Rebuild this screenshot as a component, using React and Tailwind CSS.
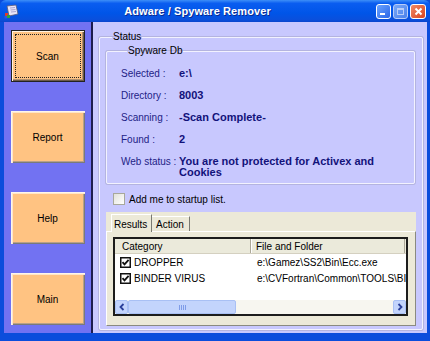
import React from 'react';

const sans = "font-['Liberation_Sans',Arial,sans-serif]";

function AppIcon() {
  return (
    <svg width="15" height="15" viewBox="0 0 15 15">
      <path d="M3 2 L12 1 L14 10 L5 12 Z" fill="#e8e4f8" stroke="#5a5a7a" strokeWidth="0.8" />
      <path d="M6 4 L11 3.5 M6.5 6 L11.5 5.5 M7 8 L12 7.5" stroke="#9a94c8" strokeWidth="0.8" />
      <rect x="1" y="9" width="3" height="3" fill="#e03a2a" />
      <rect x="3" y="11" width="3" height="3" fill="#2aa63a" />
      <rect x="0.5" y="12" width="2.5" height="2.5" fill="#2a58e0" />
    </svg>
  );
}

function TitleBar() {
  return (
    <div className="h-[22px] shrink-0 flex items-center bg-[linear-gradient(to_bottom,#3d8ff8_0%,#0a5df0_15%,#0055e8_60%,#0a4fdc_90%,#0a46cc_100%)] rounded-t-[6px]">
      <div className="ml-[4px] w-[15px] h-[15px] flex items-center justify-center">
        <AppIcon />
      </div>
      <div className="flex-1 text-center text-white text-[11px] font-bold leading-none tracking-[0.1px] [text-shadow:1px_1px_0_#0a2a90]">
        Adware / Spyware Remover
      </div>
      <div className="flex items-center gap-[2px] pr-[4px]">
        <div className="w-[15px] h-[15px] rounded-[3px] border border-white bg-[linear-gradient(135deg,#6aa3ff,#2a66e8)] flex items-end pl-[3px] pb-[3px]">
          <div className="w-[5px] h-[2px] bg-white" />
        </div>
        <div className="w-[15px] h-[15px] rounded-[3px] border border-[#b8cdf8] bg-[linear-gradient(135deg,#7aa8f6,#4a82ec)] flex items-center justify-center">
          <div className="w-[7px] h-[7px] border border-[#b8cdf8] border-t-2" />
        </div>
        <div className="w-[16px] h-[15px] rounded-[3px] border border-white bg-[linear-gradient(135deg,#f08a66,#d9441e)] flex items-center justify-center">
          <svg width="9" height="9" viewBox="0 0 9 9">
            <path d="M1.5 1.5 L7.5 7.5 M7.5 1.5 L1.5 7.5" stroke="#fff" strokeWidth="2" />
          </svg>
        </div>
      </div>
    </div>
  );
}

function SideButton({ label, active }) {
  return (
    <button
      className={`w-[74px] h-[52px] shrink-0 bg-[#ffc382] flex p-[3px] ${
        active
          ? 'border border-[#222] shadow-[inset_1px_1px_0_#fff3e3,inset_-1px_-1px_0_#6b5a48,inset_-2px_-2px_0_#b09070]'
          : 'shadow-[inset_1px_1px_0_#fff6ea,inset_2px_2px_0_#ffe6c8,inset_-1px_-1px_0_#7a7a7a,inset_-2px_-2px_0_#b8a088]'
      }`}
    >
      <div
        className={`flex-1 flex items-center justify-center text-[10px] text-black border border-dotted ${
          active ? 'border-[#222]' : 'border-transparent'
        }`}
      >
        {label}
      </div>
    </button>
  );
}

function Row({ label, value }) {
  return (
    <div className="h-[22px] flex items-center">
      <span className="w-[58px] text-[10px] text-[#1e1e86]">{label}</span>
      <span className="text-[11px] font-bold text-[#12127a]">{value}</span>
    </div>
  );
}

function Check() {
  return (
    <svg width="11" height="11" viewBox="0 0 11 11" className="shrink-0">
      <rect x="0.75" y="0.75" width="9.5" height="9.5" fill="#fff" stroke="#111" strokeWidth="1.5" />
      <path d="M2.5 5.2 L4.5 7.4 L8.6 2.8" fill="none" stroke="#111" strokeWidth="1.8" />
    </svg>
  );
}

function ScrollBtn({ dir }) {
  return (
    <div className="w-[13px] h-full shrink-0 bg-[#c3d4fc] border border-[#a9c0f4] rounded-[2px] flex items-center justify-center">
      <svg width="6" height="8" viewBox="0 0 6 8">
        <path
          d={dir === 'left' ? 'M4.5 1 L1.5 4 L4.5 7' : 'M1.5 1 L4.5 4 L1.5 7'}
          fill="none"
          stroke="#2a3f9a"
          strokeWidth="1.8"
        />
      </svg>
    </div>
  );
}

const results = [
  { cat: 'DROPPER', path: 'e:\\Gamez\\SS2\\Bin\\Ecc.exe' },
  { cat: 'BINDER VIRUS', path: 'e:\\CVFortran\\Common\\TOOLS\\BINDER.EXE' },
];

export default function App() {
  return (
    <div className={`w-[430px] h-[341px] bg-[#0b4ddc] flex flex-col overflow-hidden ${sans}`}>
      <TitleBar />
      <div className="flex flex-1 min-h-0 pl-[4px] pr-[3px] pb-[8px]">
        {/* Left menu */}
        <div className="w-[89px] shrink-0 bg-[#7272f2] border-r-2 border-[#1c1c4e] flex flex-col items-center pt-[8px] gap-[29px]">
          <SideButton label="Scan" active />
          <SideButton label="Report" />
          <SideButton label="Help" />
          <SideButton label="Main" />
        </div>

        {/* Main area */}
        <div className="flex-1 min-w-0 bg-[#c8c8fe] pl-[6px] pr-[4px] pt-[9px]">
          <fieldset className="min-w-0 border border-[#f2f2ff] shadow-[0_0_0_1px_#b4b4e0] rounded-[2px] px-[6px] pb-[3px]">
            <legend className="ml-[6px] px-[1px] text-[10px] leading-[12px] text-black">Status</legend>

            <fieldset className="min-w-0 mt-[2px] border border-[#f2f2ff] shadow-[0_0_0_1px_#b4b4e0] rounded-[2px] pl-[14px] pt-[5px] pb-[5px] mr-[1px]">
              <legend className="ml-[6px] px-[1px] text-[10px] leading-[12px] text-black">Spyware Db</legend>
              <Row label="Selected :" value="e:\" />
              <Row label="Directory :" value="8003" />
              <Row label="Scanning :" value="-Scan Complete-" />
              <Row label="Found :" value="2" />
              <div className="flex items-start pt-[6px] h-[28px]">
                <span className="w-[58px] text-[10px] leading-[11px] text-[#1e1e86]">Web status :</span>
                <span className="w-[205px] text-[11px] leading-[11px] font-bold text-[#12127a]">
                  You are not protected for Activex and Cookies
                </span>
              </div>
            </fieldset>

            <label className="mt-[9px] ml-[7px] flex items-center gap-[4px] h-[12px]">
              <span className="w-[12px] h-[12px] border border-[#a8a89c] bg-[linear-gradient(135deg,#e2e2da,#ffffff)]" />
              <span className="text-[10px] text-black">Add me to startup list.</span>
            </label>

            {/* Tab control */}
            <div className="mt-[7px] h-[114px] bg-[#ece9d8] flex flex-col">
              <div className="h-[19px] flex items-end pl-[5px]">
                <div className="relative z-10 w-[41px] h-[18px] -mb-px bg-[#ece9d8] border-t border-l border-white border-r border-r-[#7a7a72] flex items-start pl-[2px] pt-[2px] text-[10px] text-black">
                  Results
                </div>
                <div className="w-[38px] h-[15px] bg-[#ece9d8] border-t border-white border-r border-r-[#7a7a72] flex items-center pl-[4px] text-[10px] text-black">
                  Action
                </div>
              </div>
              <div className="flex-1 min-h-0 border border-white border-r-[#8a8a80] border-b-[#8a8a80] pl-[6px] pr-[7px] pt-[5px] pb-[9px]">
                <div className="h-full border-2 border-[#1c1c1c] bg-white flex flex-col overflow-hidden">
                  <div className="h-[15px] shrink-0 flex bg-[#ebeadb] border-b border-[#d4d0c0] text-[10px] text-black">
                    <div className="w-[136px] shrink-0 pl-[7px] flex items-center border-r border-[#aca899] shadow-[1px_0_0_#fff]">
                      Category
                    </div>
                    <div className="flex-1 pl-[5px] flex items-center border-r border-[#aca899] mr-[1px]">
                      File and Folder
                    </div>
                  </div>
                  {results.map((r) => (
                    <div key={r.cat} className="h-[16px] shrink-0 flex items-center text-[10px] text-black">
                      <div className="w-[136px] shrink-0 pl-[5px] flex items-center gap-[3px]">
                        <Check />
                        <span>{r.cat}</span>
                      </div>
                      <div className="flex-1 min-w-0 pl-[6px] whitespace-nowrap overflow-hidden">{r.path}</div>
                    </div>
                  ))}
                  <div className="flex-1" />
                  <div className="h-[14px] shrink-0 flex bg-[#f7f6f0]">
                    <ScrollBtn dir="left" />
                    <div className="w-[108px] h-full bg-[#c3d4fc] border border-[#a9c0f4] rounded-[2px] flex items-center justify-center gap-[1px]">
                      <div className="w-px h-[5px] bg-[#7f9ce8]" />
                      <div className="w-px h-[5px] bg-[#7f9ce8]" />
                      <div className="w-px h-[5px] bg-[#7f9ce8]" />
                      <div className="w-px h-[5px] bg-[#7f9ce8]" />
                    </div>
                    <div className="flex-1" />
                    <ScrollBtn dir="right" />
                  </div>
                </div>
              </div>
            </div>
          </fieldset>
        </div>
      </div>
    </div>
  );
}
